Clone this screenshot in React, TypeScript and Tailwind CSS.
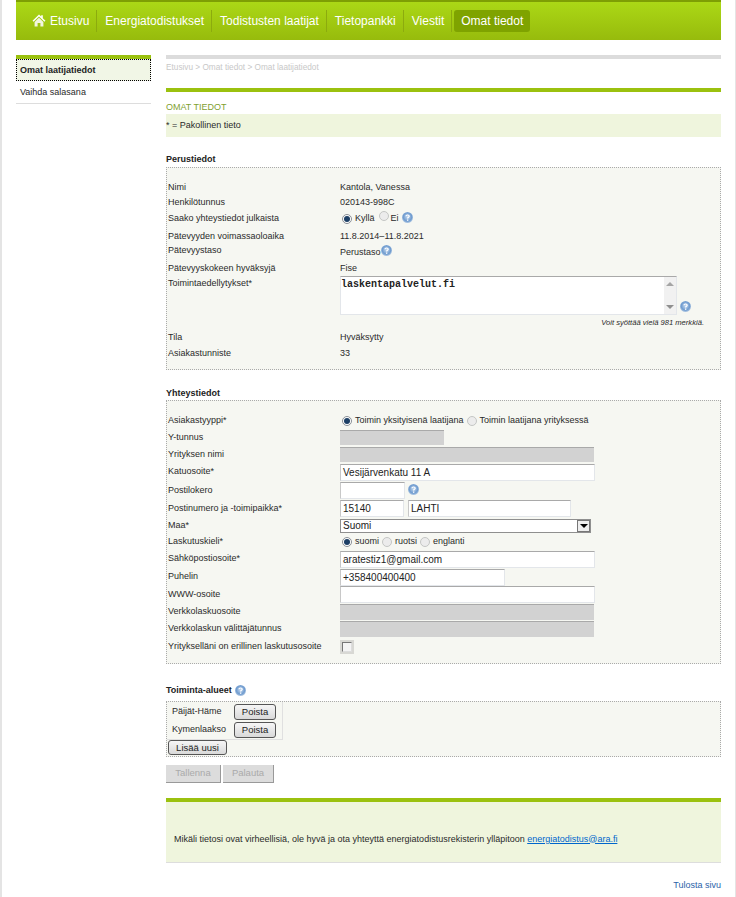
import React from "react";

const HomeIcon = () => (
  <svg width="14" height="13" viewBox="0 0 14 13" className="mr-[4px] shrink-0">
    <path d="M7 0.5 L0.5 6.8 L1.6 7.8 L7 2.6 L12.4 7.8 L13.5 6.8 L10.8 4.2 V1.2 H9.2 V2.6 Z" fill="#ffffff" />
    <path d="M2.6 8 L7 3.8 L11.4 8 V12.6 H8.4 V9 H5.6 V12.6 H2.6 Z" fill="#f2f6e0" />
  </svg>
);

const InfoIcon = ({ className = "" }: { className?: string }) => (
  <svg width="11" height="11" viewBox="0 0 11 11" className={"inline-block shrink-0 " + className}>
    <defs>
      <radialGradient id="infoball" cx="50%" cy="45%" r="55%">
        <stop offset="0%" stopColor="#c3d8ef" />
        <stop offset="70%" stopColor="#6f9bcf" />
        <stop offset="100%" stopColor="#b5cce5" />
      </radialGradient>
    </defs>
    <circle cx="5.5" cy="5.5" r="5.5" fill="url(#infoball)" />
    <path d="M3.9 4.2 C4 2.6 7.2 2.6 7.2 4.3 C7.2 5.3 5.6 5.4 5.6 6.6" fill="none" stroke="#ffffff" strokeWidth="1.2" />
    <rect x="5" y="7.5" width="1.3" height="1.3" fill="#ffffff" />
  </svg>
);

const Radio = ({ checked = false }: { checked?: boolean }) =>
  checked ? (
    <span className="inline-flex h-[10px] w-[10px] shrink-0 items-center justify-center rounded-full border border-[#8a8f96] bg-white">
      <span className="h-[6px] w-[6px] rounded-full bg-[#1d3f66]" />
    </span>
  ) : (
    <span className="inline-flex h-[10px] w-[10px] shrink-0 rounded-full border border-[#c4c6c4] bg-[#ececec]" />
  );

const TextBox = ({ value = "", className = "" }: { value?: string; className?: string }) => (
  <div
    className={
      "flex items-center overflow-hidden whitespace-nowrap border border-[#e3e6ea] border-t-[#a9a9a9] border-l-[#c8c8c8] bg-white pl-[2px] text-[10px] text-[#222] " +
      className
    }
  >
    {value}
  </div>
);

const DisabledBox = ({ className = "" }: { className?: string }) => (
  <div className={"border-t border-t-[#a9a9a9] bg-[#d2d2d2] " + className} />
);

const Row = ({
  label,
  h,
  children,
  className = "",
}: {
  label: string;
  h: string;
  children?: React.ReactNode;
  className?: string;
}) => (
  <div className={"flex items-center " + h + " " + className}>
    <div className="w-[172px] shrink-0">{label}</div>
    <div className="flex min-w-0 flex-1 items-center">{children}</div>
  </div>
);

const navItems = ["Energiatodistukset", "Todistusten laatijat", "Tietopankki", "Viestit"];

const PoistaButton = () => (
  <button className="h-[16px] w-[42px] rounded-[3px] border border-[#555] bg-gradient-to-b from-[#f6f6f6] to-[#d9d9d9] text-[9.5px] leading-none text-[#222]">
    Poista
  </button>
);

export default function App() {
  return (
    <div className="min-h-[897px] overflow-hidden border-r border-l-2 border-r-[#e4e4e4] border-l-[#e4e4e4] bg-white font-['Liberation_Sans',Arial,sans-serif] text-[9px] text-[#2a2a2a]">
      <div className="h-[897px] overflow-hidden pr-[14px] pl-[14px]">
        {/* top nav */}
        <div className="flex h-[40px] items-center border-t-2 border-t-[#7e9f04] bg-gradient-to-b from-[#abd816] to-[#97bb0c] pb-[1px] pl-[16px] text-[12px] text-white">
          <div className="flex h-[22px] items-center border-r border-r-[#8cab0e] pr-[7px]">
            <HomeIcon />
            Etusivu
          </div>
          {navItems.map((item) => (
            <div key={item} className="flex h-[22px] items-center border-r border-r-[#8cab0e] pr-[7px] pl-[8px]">
              {item}
            </div>
          ))}
          <div className="ml-[2px] flex h-[22px] items-center rounded-[3px] bg-[#7fa300] px-[7px]">Omat tiedot</div>
        </div>

        <div className="mt-[15px] flex">
          {/* sidebar */}
          <div className="w-[135px] shrink-0">
            <div className="h-[4px] bg-[#9bc10f]" />
            <div className="flex h-[22px] items-center border border-dotted border-black bg-[#f1f6e6] pt-[1px] pl-[3px] font-bold text-[#222]">
              Omat laatijatiedot
            </div>
            <div className="flex h-[23px] items-center border-b border-b-[#dddddd] pt-[1px] pl-[4px]">Vaihda salasana</div>
          </div>

          {/* main */}
          <div className="ml-[15px] min-w-0 flex-1">
            <div className="h-[4px] bg-[#dcdcdc]" />
            <div className="mt-[4px] h-[25px] text-[8.25px] leading-[10px] text-[#c8c8c8]">Etusivu &gt; Omat tiedot &gt; Omat laatijatiedot</div>
            <div className="h-[4px] bg-[#9bc10f]" />
            <div className="mt-[9px] h-[13px] leading-[12px] text-[#7f9f2f]">OMAT TIEDOT</div>
            <div className="flex h-[23px] items-center bg-[#eff5dd]">* = Pakollinen tieto</div>

            <div className="mt-[16px] h-[14px] font-bold leading-[12px] text-[#222]">Perustiedot</div>
            <div className="h-[203px] border border-dotted border-[#aaaaaa] bg-[#f6f7f2] pt-[12px] pl-[1px]">
              <Row label="Nimi" h="h-[15px]">Kantola, Vanessa</Row>
              <Row label="Henkilötunnus" h="h-[15px]">020143-998C</Row>
              <Row label="Saako yhteystiedot julkaista" h="h-[17px]">
                <span className="ml-[2px] flex items-center">
                  <Radio checked />
                  <span className="ml-[3px]">Kyllä</span>
                  <span className="ml-[4px]"><Radio /></span>
                  <span className="ml-[2px]">Ei</span>
                  <InfoIcon className="mb-[3px] ml-[3px]" />
                </span>
              </Row>
              <Row label="Pätevyyden voimassaoloaika" h="h-[16px]" className="mt-[2px]">11.8.2014–11.8.2021</Row>
              <Row label="Pätevyystaso" h="h-[12px]">
                <span className="mt-[3px]">Perustaso</span>
                <InfoIcon className="mb-[1px]" />
              </Row>
              <Row label="Pätevyyskokeen hyväksyjä" h="h-[15px]" className="mt-[4px]">Fise</Row>
              <div className="flex h-[39px]">
                <div className="w-[172px] shrink-0 pt-[1px]">Toimintaedellytykset*</div>
                <div className="flex items-end">
                  <div className="flex h-[39px] w-[337px] border border-[#e3e6ea] border-t-[#a9a9a9] bg-white">
                    <textarea
                      readOnly
                      defaultValue="laskentapalvelut.fi"
                      className="h-full min-w-0 flex-1 resize-none overflow-hidden bg-white pt-[1px] font-['Liberation_Mono',monospace] text-[10px] font-bold leading-[13px] text-[#222] outline-none"
                    />
                    <div className="flex w-[12px] flex-col items-center justify-between bg-[#f1f1f1] py-[5px]">
                      <span className="h-0 w-0 border-x-[4px] border-b-[4px] border-x-transparent border-b-[#a5a5a5]" />
                      <span className="h-0 w-0 border-x-[4px] border-t-[4px] border-x-transparent border-t-[#8f8f8f]" />
                    </div>
                  </div>
                  <InfoIcon className="mb-[3px] ml-[3px]" />
                </div>
              </div>
              <div className="mt-[2px] h-[12px] pr-[16px] text-right text-[7.6px] italic leading-[12px]">Voit syöttää vielä 981 merkkiä.</div>
              <Row label="Tila" h="h-[16px]" className="mt-[1px]">Hyväksytty</Row>
              <Row label="Asiakastunniste" h="h-[16px]">33</Row>
            </div>

            <div className="mt-[17px] h-[13px] font-bold leading-[12px] text-[#222]">Yhteystiedot</div>
            <div className="h-[264px] border border-dotted border-[#aaaaaa] bg-[#f6f7f2] pt-[11px] pl-[1px]">
              <Row label="Asiakastyyppi*" h="h-[17px]">
                <span className="ml-[2px] flex items-center gap-[3px]">
                  <Radio checked />
                  <span>Toimin yksityisenä laatijana</span>
                  <Radio />
                  <span>Toimin laatijana yrityksessä</span>
                </span>
              </Row>
              <Row label="Y-tunnus" h="h-[17px]"><DisabledBox className="h-[15px] w-[104px]" /></Row>
              <Row label="Yrityksen nimi" h="h-[17px]"><DisabledBox className="h-[15px] w-[254px]" /></Row>
              <Row label="Katuosoite*" h="h-[18px]"><TextBox value="Vesijärvenkatu 11 A" className="h-[17px] w-[255px]" /></Row>
              <Row label="Postilokero" h="h-[19px]">
                <TextBox className="h-[17px] w-[65px]" />
                <InfoIcon className="ml-[3px] mb-[2px]" />
              </Row>
              <Row label="Postinumero ja -toimipaikka*" h="h-[17px]">
                <TextBox value="15140" className="h-[17px] w-[64px]" />
                <TextBox value="LAHTI" className="ml-[4px] h-[17px] w-[163px]" />
              </Row>
              <Row label="Maa*" h="h-[17px]">
                <div className="flex h-[14px] w-[251px] items-center justify-between border border-[#8f8f8f] bg-white pl-[2px] text-[10px] text-[#222]">
                  Suomi
                  <span className="flex h-[12px] w-[13px] items-center justify-center border border-[#777] bg-[#eeeeee]">
                    <span className="h-0 w-0 border-x-[4px] border-t-[4px] border-x-transparent border-t-black" />
                  </span>
                </div>
              </Row>
              <Row label="Laskutuskieli*" h="h-[16px]">
                <span className="ml-[2px] flex items-center gap-[3px]">
                  <Radio checked />
                  <span>suomi</span>
                  <Radio />
                  <span>ruotsi</span>
                  <Radio />
                  <span>englanti</span>
                </span>
              </Row>
              <Row label="Sähköpostiosoite*" h="h-[18px]"><TextBox value="aratestiz1@gmail.com" className="h-[17px] w-[255px]" /></Row>
              <Row label="Puhelin" h="h-[18px]"><TextBox value="+358400400400" className="h-[17px] w-[165px]" /></Row>
              <Row label="WWW-osoite" h="h-[17px]"><TextBox className="h-[17px] w-[255px]" /></Row>
              <Row label="Verkkolaskuosoite" h="h-[17px]"><DisabledBox className="h-[16px] w-[254px]" /></Row>
              <Row label="Verkkolaskun välittäjätunnus" h="h-[17px]"><DisabledBox className="h-[16px] w-[254px]" /></Row>
              <Row label="Yritykselläni on erillinen laskutusosoite" h="h-[19px]">
                <span className="flex h-[14px] w-[14px] items-center justify-center bg-[#d8d8d4]">
                  <span className="h-[10px] w-[10px] border border-[#777] border-r-[#ddd] border-b-[#ddd] bg-[#f4f4f4]" />
                </span>
              </Row>
            </div>

            <div className="mt-[20px] mb-[3px] flex h-[14px] items-center gap-[3px] font-bold text-[#222]">
              Toiminta-alueet
              <InfoIcon className="mb-[2px]" />
            </div>
            <div className="h-[56px] border border-dotted border-[#aaaaaa] bg-[#f6f7f2]">
              <div className="w-[116px] border-r border-b border-[#e0e0e0] bg-[#f6f7f2] pl-[1px]">
                <div className="flex h-[19px] items-center pl-[4px]">
                  <span className="w-[62px]">Päijät-Häme</span>
                  <PoistaButton />
                </div>
                <div className="flex h-[18px] items-center pl-[4px]">
                  <span className="w-[62px]">Kymenlaakso</span>
                  <PoistaButton />
                </div>
              </div>
              <button className="ml-[1px] block h-[15px] w-[59px] rounded-[3px] border border-[#555] bg-gradient-to-b from-[#f6f6f6] to-[#d9d9d9] text-[9.5px] leading-none text-[#222]">
                Lisää uusi
              </button>
            </div>

            <div className="mt-[8px] flex gap-[2px]">
              <button className="h-[18px] w-[55px] border-r border-b border-[#999] bg-[#dcdcdc] text-[9.5px] text-[#aaaaaa]">Tallenna</button>
              <button className="h-[18px] w-[51px] border-r border-b border-[#999] bg-[#dcdcdc] text-[9.5px] text-[#aaaaaa]">Palauta</button>
            </div>

            <div className="mt-[15px] h-[4px] bg-[#9bc10f]" />
            <div className="flex h-[61px] items-end border-b border-b-[#dddddd] bg-[#eff5dd] pb-[16px] pl-[8px]">
              <span>
                Mikäli tietosi ovat virheellisiä, ole hyvä ja ota yhteyttä energiatodistusrekisterin ylläpitoon{" "}
                <a className="text-[#0066cc] underline">energiatodistus@ara.fi</a>
              </span>
            </div>
            <div className="mt-[16px] text-right text-[#2a62a8]">Tulosta sivu</div>
          </div>
        </div>
      </div>
    </div>
  );
}
